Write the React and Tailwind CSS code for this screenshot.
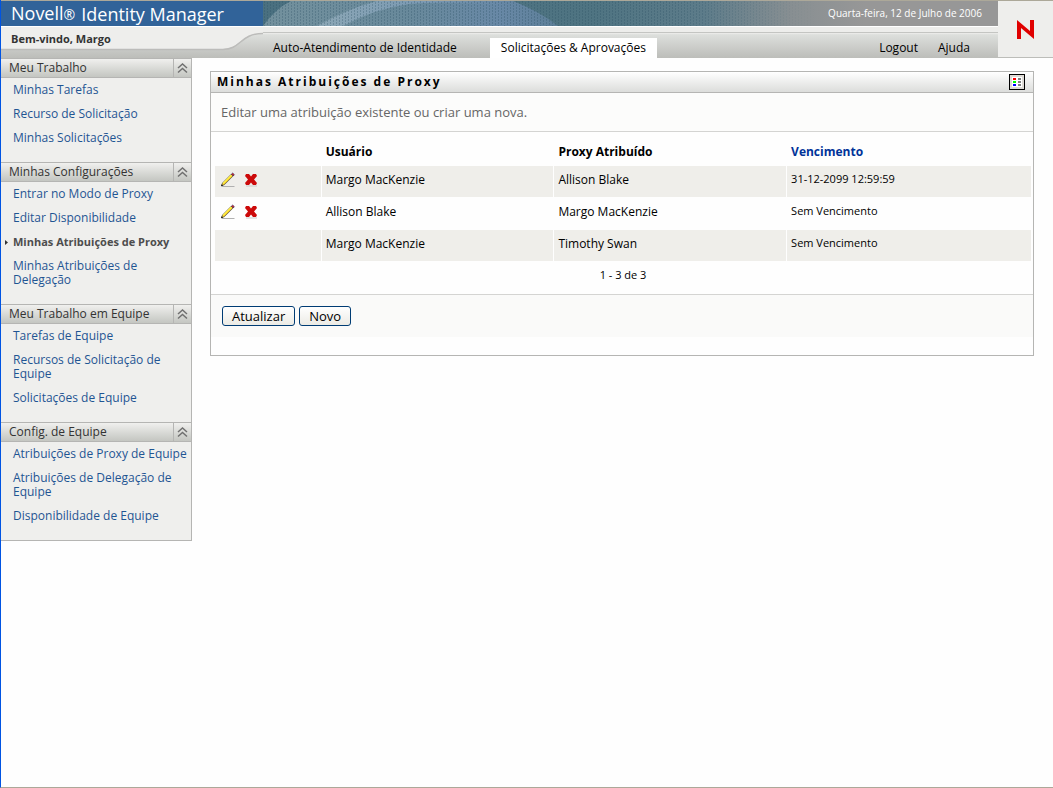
const sections = [
  {
    title: 'Meu Trabalho',
    links: ['Minhas Tarefas', 'Recurso de Solicitação', 'Minhas Solicitações'],
  },
  {
    title: 'Minhas Configurações',
    links: [
      'Entrar no Modo de Proxy',
      'Editar Disponibilidade',
      'Minhas Atribuições de Proxy',
      'Minhas Atribuições de Delegação',
    ],
  },
  {
    title: 'Meu Trabalho em Equipe',
    links: ['Tarefas de Equipe', 'Recursos de Solicitação de Equipe', 'Solicitações de Equipe'],
  },
  {
    title: 'Config. de Equipe',
    links: ['Atribuições de Proxy de Equipe', 'Atribuições de Delegação de Equipe', 'Disponibilidade de Equipe'],
  },
]

const current = 'Minhas Atribuições de Proxy'

const rows = [
  { user: 'Margo MacKenzie', proxy: 'Allison Blake', expires: '31-12-2099 12:59:59', editable: true },
  { user: 'Allison Blake', proxy: 'Margo MacKenzie', expires: 'Sem Vencimento', editable: true },
  { user: 'Margo MacKenzie', proxy: 'Timothy Swan', expires: 'Sem Vencimento', editable: false },
]

function PencilIcon() {
  return (
    <svg width="16" height="16" viewBox="0 0 16 16" aria-hidden="true">
      <path d="M2 14.5h12.500" stroke="#b0b0b0" />
      <path d="M1.500 13.800l1-2.800 9-9 1.800 1.800-9 9z" fill="#f2c81e" stroke="#4a4a4a" strokeWidth="0.7" />
      <path d="M3 11.500l8.500-8.500" stroke="#fff04a" strokeWidth="1.2" />
      <path d="M11.300 2.200l1.400-1.200 1.700 1.700-1.300 1.300z" fill="#c8252c" stroke="#2b2b5e" strokeWidth="0.6" />
      <path d="M1 14.200l.7-2 1.400 1.400z" fill="#111" />
    </svg>
  )
}

function DeleteIcon() {
  return (
    <svg width="14" height="14" viewBox="0 0 14 14" aria-hidden="true">
      <path d="M2 13h11" stroke="#c9c9c9" />
      <path d="M2 1h3l2 2.500L9 1h3l1 2-3 3.500 3 3.500-1 2H9L7 9.500 5 12H2l-1-2 3-3.500L1 3z" fill="#cc0a0a" />
    </svg>
  )
}

function CollapseIcon() {
  return (
    <svg width="11" height="11" viewBox="0 0 11 11" fill="none" stroke="#707070" strokeWidth="1.5" aria-hidden="true">
      <path d="M1 5l4.500-4L10 5M1 9.500l4.500-4 4.500 4" />
    </svg>
  )
}

function LegendIcon() {
  return (
    <svg width="16" height="16" viewBox="0 0 16 16" shapeRendering="crispEdges" aria-hidden="true">
      <rect width="16" height="16" fill="#000" />
      <rect x="1" y="1" width="14" height="14" fill="#dedbd6" />
      <rect x="3" y="3" width="10" height="10" fill="#fff" />
      <path d="M4 4h3v2H4z" fill="#f00" />
      <path d="M4 7h3v2H4z" fill="#0f0" />
      <path d="M4 10h3v2H4z" fill="#00f" />
      <path d="M9 4h3v2H9zM9 7h3v2H9zM9 10h3v2H9z" fill="#808080" />
    </svg>
  )
}

function BannerArt() {
  return (
    <svg className="absolute inset-0 h-full w-full" aria-hidden="true">
      <defs>
        <linearGradient id="band">
          <stop offset="0" stopColor="#4a7080" />
          <stop offset="0.45" stopColor="#4f7482" />
          <stop offset="0.6" stopColor="#5d7c8a" />
          <stop offset="0.72" stopColor="#888f92" />
          <stop offset="0.82" stopColor="#979797" />
        </linearGradient>
        <linearGradient id="globe">
          <stop offset="0" stopColor="#73919d" />
          <stop offset="0.5" stopColor="#68899b" />
          <stop offset="0.8" stopColor="#6888a6" />
          <stop offset="1" stopColor="#5d7f98" />
        </linearGradient>
        <linearGradient id="arc">
          <stop offset="0" stopColor="#93adbb" stopOpacity="0.8" />
          <stop offset="0.6" stopColor="#82a0bd" stopOpacity="0.7" />
          <stop offset="1" stopColor="#7696b8" stopOpacity="0" />
        </linearGradient>
        <linearGradient id="dotFade">
          <stop offset="0" stopColor="#fff" />
          <stop offset="0.55" stopColor="#fff" />
          <stop offset="0.75" stopColor="#000" />
        </linearGradient>
        <pattern id="dots" width="6" height="3" patternUnits="userSpaceOnUse">
          <path d="M1 0h1v2H1zM4 1h1v2H4z" fill="#2c5163" fillOpacity="0.3" />
        </pattern>
        <mask id="dotMask">
          <rect width="100%" height="100%" fill="url(#dotFade)" />
        </mask>
      </defs>
      <rect width="100%" height="100%" fill="url(#band)" />
      <path d="M28 0Q12 8 0 25h295Q276 10 250 0z" fill="url(#globe)" />
      <path d="M54 25Q84 8 114 0h126v4Q180 0 146 3 110 8 80 25z" fill="url(#arc)" />
      <rect width="100%" height="100%" fill="url(#dots)" mask="url(#dotMask)" />
    </svg>
  )
}

function Header() {
  return (
    <header className="flex border-t border-[#aca899]">
      <div className="min-w-0 flex-1">
        <div className="flex h-[25px]">
          <h1 className="flex w-[262px] shrink-0 items-center gap-[6px] bg-[#316399] pl-[10px] text-[18px] leading-6 whitespace-nowrap text-white">
            <span>
              Novell<span className="text-[14px]">®</span>
            </span>
            <span>Identity Manager</span>
          </h1>
          <div className="relative flex flex-1 items-center justify-end">
            <BannerArt />
            <span className="relative pr-4 text-[10px] text-white">Quarta-feira, 12 de Julho de 2006</span>
          </div>
        </div>
        <div className="flex h-8 border-t border-white bg-linear-to-b from-[#ededeb] from-20% via-[#dddfdc] via-25% to-[#bcbdb9]">
          <div className="relative w-[262px] shrink-0">
            <svg className="absolute inset-0 h-full w-full" viewBox="0 0 262 31" preserveAspectRatio="none" aria-hidden="true">
              <path d="M0 22h222c18 0 17-16 40-16V0H0z" fill="#eeeeec" />
              <path d="M0 22.500h222c18 0 17-16 40-16" fill="none" stroke="#bcbcba" strokeWidth="1.500" />
            </svg>
            <p className="relative pt-1 pl-[10px] text-[11px] leading-4 font-bold text-[#333]">Bem-vindo, Margo</p>
          </div>
          <nav className="relative flex flex-1 items-end text-[12px] leading-5 text-black">
            <span className="absolute inset-x-0 top-[5px] border-t border-[#c4c5c2]" />
            <a href="#identidade" className="pl-[10px]">Auto-Atendimento de Identidade</a>
            <a href="#solicitacoes" className="ml-[33px] bg-white px-[11px]">Solicitações &amp; Aprovações</a>
            <a href="#logout" className="mr-5 ml-auto">Logout</a>
            <a href="#ajuda" className="mr-7">Ajuda</a>
          </nav>
        </div>
      </div>
      <div className="grid w-[55px] place-items-center border-b border-[#bcbdb9] bg-[#eeeeec]">
        <svg width="17" height="19" viewBox="0 0 17 19" role="img" aria-label="Novell">
          <path d="M0 0l13 11V0h4v19L4 8v11H0z" fill="#e00000" />
        </svg>
      </div>
    </header>
  )
}

function Section({ title, links }) {
  return (
    <section>
      <div className="flex h-5 border-y border-[#b5b5b3] bg-linear-to-b from-[#f0f0ee] to-[#c4c6c1]">
        <h2 className="flex-1 pl-2 text-[12px] leading-[18px] text-[#333]">{title}</h2>
        <button type="button" aria-label={`Recolher ${title}`} className="grid w-[18px] place-items-center border-l border-[#b5b5b3]">
          <CollapseIcon />
        </button>
      </div>
      <ul className="flex flex-col gap-[10px] pt-[5px] pb-[17px] text-[12px] leading-[14px]">
        {links.map((link) => (
          <li key={link} className="flex">
            <span className="flex w-3 shrink-0 items-center pl-1">
              {link === current && (
                <svg width="3" height="5" viewBox="0 0 3 5" aria-hidden="true">
                  <path d="M0 0l3 2.500L0 5z" fill="#333" />
                </svg>
              )}
            </span>
            <a href="#proxy" className={link === current ? 'text-[11px] font-bold text-[#4d4d4d]' : 'text-[#1f5593]'}>
              {link}
            </a>
          </li>
        ))}
      </ul>
    </section>
  )
}

function ProxyTable() {
  return (
    <table className="w-full table-fixed border-separate border-spacing-px text-left text-[12px] text-black">
      <colgroup>
        <col className="w-[13%]" />
        <col className="w-[28.5%]" />
        <col className="w-[28.5%]" />
        <col />
      </colgroup>
      <thead>
        <tr className="h-[26px]">
          <td />
          <th scope="col" className="px-1">Usuário</th>
          <th scope="col" className="px-1">Proxy Atribuído</th>
          <th scope="col" className="px-1 text-[#003399]">
            <a href="#vencimento">Vencimento</a>
          </th>
        </tr>
      </thead>
      <tbody>
        {rows.map((row, i) => (
          <tr key={i} className="h-[31px] odd:bg-[#efeeea]">
            <td className="px-[5px] pb-1">
              {row.editable && (
                <div className="flex items-center gap-2">
                  <button type="button" aria-label="Editar">
                    <PencilIcon />
                  </button>
                  <button type="button" aria-label="Excluir">
                    <DeleteIcon />
                  </button>
                </div>
              )}
            </td>
            <td className="px-1 pb-1">{row.user}</td>
            <td className="px-1 pb-1">{row.proxy}</td>
            <td className="px-1 pb-1 text-[11px]">{row.expires}</td>
          </tr>
        ))}
      </tbody>
    </table>
  )
}

export default function App() {
  const button =
    'h-5 rounded-[3px] border border-[#003c74] bg-linear-to-b from-white to-[#ecebe5] px-[9px] text-[13px] leading-[18px] text-black'

  return (
    <div className="flex min-h-screen flex-col border-b border-l border-b-[#aca899] border-l-[#0054e3] bg-[#fefefe] font-['Open_Sans',sans-serif]">
      <Header />
      <div className="flex items-start">
        <aside className="w-[191px] shrink-0 border-r border-b border-[#b5b5b3] bg-[#efefed]">
          {sections.map((section) => (
            <Section key={section.title} {...section} />
          ))}
        </aside>
        <main className="mt-[13px] mr-[19px] ml-[18px] min-w-0 flex-1 border border-[#b5b5b3]">
          <div className="flex h-[21px] items-center justify-between border-b border-[#b5b5b3] bg-linear-to-b from-white to-[#dcdddb] pr-2 pl-[6px]">
            <h2 className="text-[12px] font-bold tracking-[2px] text-black">Minhas Atribuições de Proxy</h2>
            <button type="button" aria-label="Legenda">
              <LegendIcon />
            </button>
          </div>
          <p className="border-b border-[#d4d4d2] bg-[#fcfcfb] py-[10px] pl-[10px] text-[13px] leading-[18px] text-[#666]">
            Editar uma atribuição existente ou criar uma nova.
          </p>
          <div className="pt-[6px] pr-px pl-[3px]">
            <ProxyTable />
            <p className="pt-[4px] pb-[10px] text-center text-[11px] leading-[18px] text-black">1 - 3 de 3</p>
          </div>
          <div className="mb-[18px] flex gap-1 border-t border-[#d4d4d2] bg-[#fafaf9] px-[11px] py-[11px]">
            <button type="button" className={button}>Atualizar</button>
            <button type="button" className={button}>Novo</button>
          </div>
        </main>
      </div>
    </div>
  )
}
